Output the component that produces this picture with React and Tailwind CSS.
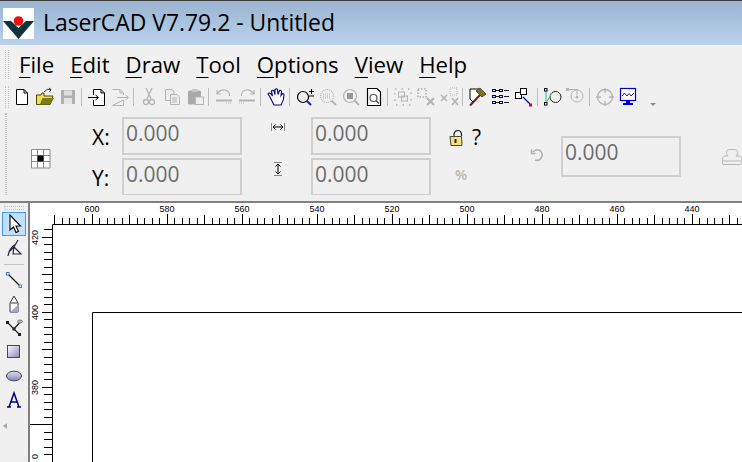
import React from 'react';

const UI_FONT = { fontFamily: '"Open Sans", "Noto Sans", sans-serif' };

const GRAY = '#b4b4b4';

const Logo = () => (
  <svg width="31" height="31" viewBox="0 0 31 31" className="shrink-0">
    <rect width="31" height="31" fill="#fff" />
    <path d="M0 13 L8 13 L15.5 20 L23 13 L31 13 L15.5 31 Z" fill="#10343c" />
    <circle cx="15.5" cy="13" r="4.8" fill="#f01010" />
  </svg>
);

const icons = {
  file: (
    <path d="M4.5 2.5 H12 L15.5 6 V17.5 H4.5 Z M12 2.5 V6 H15.5" fill="#fff" stroke="#000" />
  ),
  open: (
    <>
      <path d="M1.5 8 H6 L7 6 H9 V9 H18 L15 17.5 H1.5 Z" fill="#f4e04a" stroke="#4a4a10" />
      <path d="M5 17 L7.5 11 H19 L15.5 17.5 H3 Z" fill="#7d7a1c" />
      <path d="M9 5 Q12 1 16 2.5 M16 2.5 L14 1 M16 2.5 L14.5 5" fill="none" stroke="#333" />
    </>
  ),
  save: (
    <>
      <rect x="3" y="3" width="14" height="14" fill="#b0b0b0" />
      <rect x="6" y="3.5" width="8" height="5" fill="#dedede" />
      <rect x="6" y="11" width="8" height="6" fill="#e4e4e4" />
    </>
  ),
  import: (
    <>
      <path d="M6.5 2.5 H14 L17.5 6 V18.5 H6.5 V13 M6.5 8 V2.5 M14 2.5 V6 H17.5" fill="#fff" stroke="#000" />
      <path d="M1 10.5 H11 M8.5 8 L11.5 10.5 L8.5 13" fill="none" stroke="#000" />
    </>
  ),
  export: (
    <>
      <path d="M2.5 2.5 H10 L13.5 6 V8 M13.5 13 V18.5 H2.5 Z M10 2.5 V6 H13.5" fill="none" stroke={GRAY} />
      <path d="M7 10.5 H18 M15.5 8 L18.5 10.5 L15.5 13" fill="none" stroke={GRAY} />
    </>
  ),
  cut: (
    <>
      <path d="M7 1 L12 12 M13 1 L8 12" fill="none" stroke={GRAY} strokeWidth="1.3" />
      <circle cx="7" cy="15" r="2.5" fill="none" stroke={GRAY} strokeWidth="1.3" />
      <circle cx="13" cy="15" r="2.5" fill="none" stroke={GRAY} strokeWidth="1.3" />
    </>
  ),
  copy: (
    <>
      <path d="M3.5 2.5 H10 L12 5 V13.5 H3.5 Z" fill="#eee" stroke={GRAY} />
      <path d="M8.5 7.5 H15 L17.5 10 V17.5 H8.5 Z M10 11 H15 M10 13 H15 M10 15 H15" fill="#eee" stroke={GRAY} />
    </>
  ),
  paste: (
    <>
      <rect x="3" y="3.5" width="13" height="14" rx="1.5" fill="#a9a9a9" />
      <rect x="6.5" y="2" width="6" height="3" rx="1" fill="#c8c8c8" />
      <rect x="10.5" y="10" width="8" height="7.5" fill="#eee" stroke={GRAY} />
    </>
  ),
  undo: (
    <>
      <path d="M3 7 Q6 2.5 11 3 Q16 4 15.5 9 M3 3 V7 H7" fill="none" stroke={GRAY} strokeWidth="1.2" />
      <path d="M2 13.5 H18" stroke={GRAY} strokeWidth="2" />
      <path d="M12 16 H18" stroke={GRAY} strokeDasharray="1 1" />
    </>
  ),
  redo: (
    <>
      <path d="M17 7 Q14 2.5 9 3 Q4 4 4.5 9 M17 3 V7 H13" fill="none" stroke={GRAY} strokeWidth="1.2" />
      <path d="M2 13.5 H18" stroke={GRAY} strokeWidth="2" />
      <path d="M2 16 H8" stroke={GRAY} strokeDasharray="1 1" />
    </>
  ),
  hand: (
    <path
      d="M4 10 L2 7 Q3 5 5 7 L6.5 9 L5.5 4 Q7 2.5 8 4 L9 7.5 L9 2.5 Q10.5 1.2 11.5 2.5 L12 7.5 L13.5 3.5 Q15 3 15.5 4.5 L15 8.5 L16.5 6.5 Q18 6.5 18 8 Q18 13 15 18 H8 Q6 14 4 10 Z"
      fill="#fff"
      stroke="#00008b"
      strokeWidth="1.1"
    />
  ),
  zoomIn: (
    <>
      <circle cx="8" cy="10" r="5.5" fill="none" stroke="#000" strokeWidth="1.2" />
      <path d="M12 14 L16 18" stroke="#1a1ac8" strokeWidth="2" />
      <path d="M14 4.5 H19 M16.5 2 V7 M14 9 H19" stroke="#000" />
    </>
  ),
  zoomGrid: (
    <>
      <circle cx="9" cy="9" r="6.5" fill="none" stroke={GRAY} strokeWidth="1.2" strokeDasharray="1 1" />
      <path d="M5 7 H13 M5 9 H13 M5 11 H13" stroke={GRAY} strokeDasharray="1 1" />
      <path d="M13.5 13.5 L18 18" stroke={GRAY} strokeWidth="2" />
    </>
  ),
  zoomBox: (
    <>
      <circle cx="9" cy="9" r="6.5" fill="none" stroke={GRAY} strokeWidth="1.2" />
      <rect x="6" y="6" width="6" height="6" fill="#9a9a9a" />
      <path d="M13.5 13.5 L18 18" stroke={GRAY} strokeWidth="2" />
    </>
  ),
  zoomPage: (
    <>
      <path d="M3.5 1.5 H13 L16.5 5 V18.5 H3.5 Z" fill="#fff" stroke="#000" strokeWidth="1.2" />
      <circle cx="9.5" cy="11" r="3.5" fill="none" stroke="#555" strokeWidth="1.2" />
      <path d="M12 13.5 L15 16.5" stroke="#555" strokeWidth="1.5" />
    </>
  ),
  group: (
    <>
      <rect x="2" y="2" width="16" height="16" fill="none" stroke={GRAY} strokeWidth="1.5" strokeDasharray="1.5 5" />
      <rect x="5.5" y="5" width="6" height="5" fill="none" stroke={GRAY} />
      <rect x="8.5" y="9" width="6" height="5" fill="none" stroke={GRAY} />
    </>
  ),
  ungroup: (
    <>
      <rect x="2" y="2" width="8" height="8" fill="none" stroke={GRAY} strokeWidth="1.5" strokeDasharray="1.5 1.5" />
      <path d="M11 11 L18 18 M18 11 L11 18" stroke={GRAY} strokeWidth="2" />
    </>
  ),
  delNode: (
    <>
      <path d="M2 8 L8 14 M8 8 L2 14 M13 11 L19 18 M19 11 L13 18" stroke={GRAY} strokeWidth="1.6" />
      <rect x="11" y="1" width="7" height="7" fill="none" stroke={GRAY} strokeDasharray="1 1" />
    </>
  ),
  hammer: (
    <>
      <path d="M2 2 H11 L14 6 L5 15 L2 12 Z" fill="#fff" stroke="#000" />
      <path d="M2 18.5 L12 8" stroke="#6b1c1c" strokeWidth="2" />
      <path d="M8 4 L12 1 L18 7 L14 10 Z" fill="#7b7420" stroke="#222" strokeWidth=".7" />
    </>
  ),
  list: (
    <>
      <g fill="none" stroke="#00008b">
        <rect x="1.5" y="2.5" width="3" height="2" />
        <rect x="8.5" y="2.5" width="3" height="2" />
        <rect x="1.5" y="8.5" width="3" height="2" />
        <rect x="8.5" y="8.5" width="3" height="2" />
        <rect x="1.5" y="14.5" width="3" height="2" />
        <rect x="8.5" y="14.5" width="3" height="2" />
      </g>
      <path d="M5 3.5 H8 M5 9.5 H8 M5 15.5 H8 M13 3.5 H18 M13 9.5 H18 M13 15.5 H18" stroke="#222" />
    </>
  ),
  nodes: (
    <>
      <rect x="1.5" y="5.5" width="6" height="6" fill="#fff" stroke="#000" />
      <rect x="6.5" y="1.5" width="6" height="6" fill="#fff" stroke="#000" />
      <path d="M9 10 L16 17" stroke="#0000e0" strokeWidth="1.2" />
      <rect x="15" y="16.5" width="3" height="3" fill="#f00000" />
    </>
  ),
  bezier: (
    <>
      <circle cx="12.5" cy="10" r="5.5" fill="none" stroke="#222" />
      <path d="M3 3 V16" stroke="#18b8c8" />
      <path d="M3 16 L9 6" stroke="#70c030" />
      <rect x="1.5" y="1.5" width="2.5" height="2.5" fill="#fff" stroke="#000" />
      <rect x="1.5" y="15.5" width="2.5" height="2.5" fill="#fff" stroke="#000" />
    </>
  ),
  offset: (
    <>
      <rect x="0" y="1" width="3" height="3" fill={GRAY} />
      <path d="M3 2.5 H12" stroke={GRAY} />
      <circle cx="11" cy="9" r="6" fill="none" stroke={GRAY} />
      <circle cx="11" cy="10" r="1.5" fill={GRAY} />
      <path d="M11 3 V8" stroke={GRAY} />
    </>
  ),
  target: (
    <>
      <circle cx="10" cy="10" r="7.5" fill="none" stroke={GRAY} strokeWidth="1.3" />
      <path d="M10 1 V6 M10 14 V19 M1 10 H6 M14 10 H19" stroke={GRAY} strokeWidth="1.3" />
    </>
  ),
  screen: (
    <>
      <rect x="2.5" y="1.5" width="15" height="12" fill="#fff" stroke="#0000d8" strokeWidth="1.2" />
      <path d="M4 9 L6.5 6 L9 9 L11 6.5 L13 9 L16 6" fill="none" stroke="#103060" />
      <path d="M8 15 H12 M5 17 H15" stroke="#0000e0" strokeWidth="2" />
    </>
  ),
};

const topTools = [
  ['file', 'open', 'save'],
  ['import', 'export'],
  ['cut', 'copy', 'paste'],
  ['undo', 'redo'],
  ['hand'],
  ['zoomIn', 'zoomGrid', 'zoomBox', 'zoomPage'],
  ['group', 'ungroup', 'delNode'],
  ['hammer', 'list', 'nodes'],
  ['bezier', 'offset'],
  ['target', 'screen'],
];

const ToolIcon = ({ name }) => (
  <div className="flex h-[26px] w-[23px] shrink-0 items-center justify-center">
    <svg width="20" height="20" viewBox="0 0 20 20">{icons[name]}</svg>
  </div>
);

const Grip = ({ className }) => (
  <div className={`border-x border-dotted border-[#c4c4c4] ${className}`} />
);

const MenuItem = ({ first, rest }) => (
  <span>
    <span className="underline decoration-1 underline-offset-[4px]">{first}</span>
    {rest}
  </span>
);

const ValueBox = ({ className = '' }) => (
  <div className={`w-[120px] border-2 border-[#cfcfcf] bg-[#f0f0f0] pl-[2px] text-[21px] leading-[28px] text-[#6d6d6d] ${className}`}>
    0.000
  </div>
);

const AnchorGrid = () => (
  <svg width="20" height="20" viewBox="0 0 20 20" className="shrink-0">
    <path d="M.5 .5 H19 V19 H.5 Z M6.5 .5 V19 M12.5 .5 V19 M.5 6.5 H19 M.5 12.5 H19" fill="#fff" stroke="#8a8a8a" />
    <rect x="6.5" y="6.5" width="6" height="6" fill="#000" />
  </svg>
);

const WidthIcon = () => (
  <svg width="14" height="10" viewBox="0 0 14 10">
    <path d="M.5 1 V9 M13.5 1 V9" stroke="#888" />
    <path d="M2 5 H12 M4.5 2.5 L2 5 L4.5 7.5 M9.5 2.5 L12 5 L9.5 7.5" fill="none" stroke="#000" />
  </svg>
);

const HeightIcon = () => (
  <svg width="10" height="14" viewBox="0 0 10 14">
    <path d="M1 .5 H9 M1 13.5 H9" stroke="#888" />
    <path d="M5 2 V12 M2.5 4.5 L5 2 L7.5 4.5 M2.5 9.5 L5 12 L7.5 9.5" fill="none" stroke="#000" />
  </svg>
);

const LockIcon = () => (
  <svg width="16" height="18" viewBox="0 0 16 18">
    <path d="M6 7 V4.5 Q7 1.5 10 1.5 Q13 1.5 13.5 5 V7" fill="none" stroke="#222" strokeWidth="1.2" />
    <path d="M2 7.5 H13.5 L14 16.5 H3 Z" fill="#f6e27e" stroke="#444" />
    <rect x="6.5" y="10" width="2" height="4" fill="#222" />
  </svg>
);

const RotateIcon = () => (
  <svg width="14" height="14" viewBox="0 0 14 14">
    <path d="M3 4 Q6 0.5 10 2.5 Q13.5 5.5 11.5 9.5 Q9 13.5 5 12 M1.5 1.5 V5.5 H5.5" fill="none" stroke="#b0b0b0" strokeWidth="1.6" />
  </svg>
);

const StampIcon = () => (
  <svg width="22" height="18" viewBox="0 0 22 18" className="shrink-0">
    <path d="M7 8 Q3 3 8 1.5 H14 Q19 3 15 8 H19 Q21.5 9 21 13 H1.5 Q1 9 3 8 Z M1.5 13 V16 Q1.5 16.5 3 16.5 H19.5 Q21 16.5 21 15 V13" fill="none" stroke="#b8b8b8" />
  </svg>
);

const range = (n) => Array.from({ length: n }, (_, i) => i);

// x/y of the ruler marks, in page coordinates (3.75 px per unit)
const Canvas = () => {
  const hTicks = range(95).map((i) => 54.5 + i * 7.5);
  const vTicks = range(32).map((i) => 229.8 + i * 7.5);
  const hLabels = [600, 580, 560, 540, 520, 500, 480, 460, 440];
  const vLabels = [420, 400, 380];
  return (
    <svg width="712" height="259" viewBox="30 203 712 259" className="block bg-white" style={{ fontFamily: '"Liberation Sans", sans-serif' }}>
      <path d="M52.5 224.5 H742 M52.5 224.5 V462 M92.5 462 V312.5 H742" fill="none" stroke="#000" />
      {hTicks.map((x, i) => (
        <path
          key={x}
          d={`M${Math.floor(x) + 0.5} 224 V${i % 5 === 0 ? (i % 10 === 5 ? 214 : 215) : 218}`}
          stroke="#000"
        />
      ))}
      {vTicks.map((y, i) => {
        const mark = i % 5 === 1;
        const left = i === 26 ? 30 : mark ? 42 : 44;
        return <path key={y} d={`M${left} ${Math.floor(y) + 0.5} H52`} stroke="#000" />;
      })}
      {hLabels.map((v, i) => (
        <text key={v} x={92 + i * 75} y="212" textAnchor="middle" fontSize="9" fill="#000">
          {v}
        </text>
      ))}
      {vLabels.map((v, i) => (
        <text
          key={v}
          transform={`translate(38 ${237.5 + i * 75}) rotate(-90)`}
          textAnchor="middle"
          fontSize="9"
          fill="#000"
        >
          {v}
        </text>
      ))}
      <text transform="translate(38 459) rotate(-90)" fontSize="9" fill="#000">0</text>
    </svg>
  );
};

const SideIcon = ({ children, selected }) => (
  <div
    className={`flex h-[24px] w-[24px] items-center justify-center ${selected ? 'border border-[#3f9bf3] bg-[#c2dffb]' : ''}`}
  >
    <svg width="20" height="20" viewBox="0 0 20 20">{children}</svg>
  </div>
);

const App = () => (
  <div className="flex h-[462px] w-[742px] flex-col overflow-hidden bg-[#f0f0f0]" style={UI_FONT}>
    <div className="flex h-[45px] shrink-0 items-center gap-[9px] border-t border-[#3c3c3c] bg-gradient-to-b from-[#9ab4d1] to-[#b9d1ec] pl-[3px] pt-[1px]">
      <Logo />
      <span className="text-[22.9px] leading-none text-black">LaserCAD V7.79.2 - Untitled</span>
    </div>

    <div className="flex h-[39px] shrink-0 items-center pl-[5px]">
      <Grip className="h-[29px] w-[4px]" />
      <div className="ml-[10px] flex gap-[16px] pt-[2px] text-[22.2px] leading-none text-black">
        <MenuItem first="F" rest="ile" />
        <MenuItem first="E" rest="dit" />
        <MenuItem first="D" rest="raw" />
        <MenuItem first="T" rest="ool" />
        <MenuItem first="O" rest="ptions" />
        <MenuItem first="V" rest="iew" />
        <MenuItem first="H" rest="elp" />
      </div>
    </div>

    <div className="flex h-[26px] shrink-0 items-center pl-[5px]">
      <Grip className="mr-[1px] h-[22px] w-[4px]" />
      {topTools.map((group, i) => (
        <div key={group[0]} className="flex items-center">
          {i > 0 && <div className="ml-[2px] mr-[3px] h-[18px] w-px bg-[#bdbdbd]" />}
          {group.map((name) => (
            <ToolIcon key={name} name={name} />
          ))}
        </div>
      ))}
      <svg width="8" height="8" viewBox="0 0 8 8" className="ml-[10px] mt-[14px]">
        <path d="M1 3 H7 L4 6 Z" fill="#8a8a8a" />
      </svg>
    </div>

    <div className="mt-[3px] flex h-[82px] shrink-0 overflow-hidden pl-[5px]">
      <Grip className="h-[82px] w-[4px]" />
      <div className="ml-[24px] mt-[36px] shrink-0">
        <AnchorGrid />
      </div>
      <div className="ml-[41px] mt-[4px] grid shrink-0 grid-cols-[30px_120px_69px_120px] auto-rows-[38px] gap-y-[3px]">
        <span className="self-center pt-[2px] text-[21px] leading-none text-black">X:</span>
        <ValueBox />
        <div className="flex items-start justify-center pl-[3px] pt-[5px]">
          <WidthIcon />
        </div>
        <ValueBox />
        <span className="self-center pt-[2px] text-[21px] leading-none text-black">Y:</span>
        <ValueBox />
        <div className="flex items-start justify-center pl-[3px] pt-[4px]">
          <HeightIcon />
        </div>
        <ValueBox />
      </div>
      <div className="ml-[17px] mt-[14px] flex w-[44px] shrink-0 flex-col">
        <div className="flex items-center gap-[8px]">
          <LockIcon />
          <span className="text-[21px] leading-none text-black">?</span>
        </div>
        <span className="ml-[7px] mt-[20px] text-[14px] font-semibold leading-none text-[#b4b4b4]">%</span>
      </div>
      <div className="ml-[38px] mt-[35px] shrink-0">
        <RotateIcon />
      </div>
      <ValueBox className="ml-[17px] mt-[23px] h-[41px] shrink-0" />
      <div className="ml-[40px] mt-[35px]">
        <StampIcon />
      </div>
    </div>

    <div className="mt-[6px] flex min-h-0 flex-1 border-t-2 border-[#808080]">
      <div className="flex w-[28px] shrink-0 flex-col items-center pt-[3px]">
        <div className="h-[4px] w-[20px] border-y border-dotted border-[#c4c4c4]" />
        <div className="mt-[2px] flex flex-col items-center">
          <SideIcon selected>
            <path d="M6 1 V16 L9.5 13 L12 18.5 L14.5 17.5 L12 12 H16.5 Z" fill="#fff" stroke="#000" strokeWidth="1.1" />
          </SideIcon>
          <div className="mt-[1px]">
            <SideIcon>
              <path d="M4 17 Q5 9 12 5 M14 1 L10 8 M10 8 L17 15 L9 15 Z M6 12 L10 8" fill="none" stroke="#2a2a38" strokeWidth="1.2" />
            </SideIcon>
          </div>
          <div className="my-[3px] h-px w-[20px] bg-[#c4c4c4]" />
          <SideIcon>
            <path d="M4 4 L16 16" stroke="#111" strokeWidth="1.2" />
            <rect x="2.5" y="2.5" width="2.5" height="2.5" fill="#fff" stroke="#4a80c0" />
            <rect x="15" y="15" width="2.5" height="2.5" fill="#fff" stroke="#4a80c0" />
          </SideIcon>
          <SideIcon>
            <path d="M6 18 V9 L10 2 L14 9 V18 Z" fill="#fff" stroke="#333" />
            <path d="M6 18 L14 11 V18 Z" fill="#a8a0d8" />
            <path d="M7 9 H13" stroke="#333" />
          </SideIcon>
          <SideIcon>
            <path d="M4 5 L10 11 L16 4 M10 11 L15 16" fill="none" stroke="#222" strokeWidth="1.2" />
            <rect x="2" y="3" width="3" height="3" fill="#222" />
            <rect x="8.5" y="9.5" width="3" height="3" fill="#222" />
            <rect x="14" y="15" width="3" height="3" fill="#222" />
            <ellipse cx="16" cy="3.5" rx="2.5" ry="1.5" fill="#bbb" stroke="#777" />
          </SideIcon>
          <SideIcon>
            <defs>
              <linearGradient id="rectFill" x1="0" y1="0" x2="1" y2="1">
                <stop offset="0" stopColor="#fff" />
                <stop offset="1" stopColor="#8a88b8" />
              </linearGradient>
            </defs>
            <rect x="3.5" y="3.5" width="12" height="12" fill="url(#rectFill)" stroke="#444466" />
          </SideIcon>
          <SideIcon>
            <defs>
              <linearGradient id="ovalFill" x1="0" y1="0" x2="0" y2="1">
                <stop offset="0" stopColor="#dedeee" />
                <stop offset="1" stopColor="#8a88b8" />
              </linearGradient>
            </defs>
            <ellipse cx="10" cy="10" rx="7.5" ry="4.8" fill="url(#ovalFill)" stroke="#444466" />
          </SideIcon>
          <SideIcon>
            <path d="M3 17 H7 M13 17 H17 M5 17 L10 3 L15 17 M7 12 H13" fill="none" stroke="#000080" strokeWidth="1.5" />
          </SideIcon>
          <svg width="6" height="8" viewBox="0 0 6 8" className="mr-[18px] mt-[10px]">
            <path d="M5 1 V7 L1 4 Z" fill="#a8a8a8" />
          </svg>
        </div>
      </div>
      <div className="min-w-0 flex-1 border-l-2 border-[#808080]">
        <Canvas />
      </div>
    </div>
  </div>
);

export default App;
